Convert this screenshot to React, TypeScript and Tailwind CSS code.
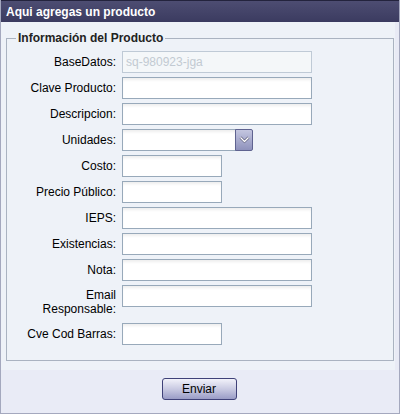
import { useState } from "react"

const font = { fontFamily: '"Liberation Sans", Arial, sans-serif' }

type Row = { label: string; lines?: string[]; width: "wide" | "short"; value?: string; disabled?: boolean }

const rows: Row[] = [
  { label: "BaseDatos:", width: "wide", value: "sq-980923-jga", disabled: true },
  { label: "Clave Producto:", width: "wide" },
  { label: "Descripcion:", width: "wide" },
  { label: "Unidades:", width: "wide" },
  { label: "Costo:", width: "short" },
  { label: "Precio Público:", width: "short" },
  { label: "IEPS:", width: "wide" },
  { label: "Existencias:", width: "wide" },
  { label: "Nota:", width: "wide" },
  { label: "Email Responsable:", lines: ["Email", "Responsable:"], width: "wide" },
  { label: "Cve Cod Barras:", width: "short" },
]

function TextBox({ row }: { row: Row }) {
  const [value, setValue] = useState(row.value ?? "")
  const w = row.width === "wide" ? "w-[190px]" : "w-[100px]"
  if (row.disabled) {
    return (
      <input
        disabled
        value={value}
        onChange={(e) => setValue(e.target.value)}
        className={`${w} h-[22px] px-[3px] text-[12px] border border-[#bfcad6] bg-[#f4f7f9] text-[#c2cad2] outline-none`}
        style={font}
      />
    )
  }
  return (
    <input
      value={value}
      onChange={(e) => setValue(e.target.value)}
      className={`${w} h-[22px] px-[3px] text-[12px] border border-[#98a9ba] bg-white shadow-[inset_0_3px_3px_-1px_rgba(0,0,0,0.07)] text-black outline-none`}
      style={font}
    />
  )
}

function UnitSelect() {
  return (
    <div className="flex h-[22px] w-[131px]">
      <div className="flex-1 border border-[#98a9ba] bg-white shadow-[inset_0_3px_3px_-1px_rgba(0,0,0,0.07)]" />
      <button className="w-[18px] h-[22px] -ml-px flex items-center justify-center rounded-r-[2px] border border-[#5f6390] bg-gradient-to-b from-[#c4c6e0] to-[#8f92bc]">
        <svg width="11" height="8" viewBox="0 0 11 8">
          <path d="M1.5 1.5 L5.5 5.5 L9.5 1.5" fill="none" stroke="#5a5a78" strokeWidth="2.6" />
          <path d="M1.5 1.5 L5.5 5.5 L9.5 1.5" fill="none" stroke="#ffffff" strokeWidth="1.3" />
        </svg>
      </button>
    </div>
  )
}

export default function App() {
  return (
    <div
      className="w-[400px] h-[414px] flex flex-col bg-[#e9ebf6] border-x border-b border-[#a4a8be]"
      style={font}
    >
      <div className="h-[22px] shrink-0 flex items-center px-[5px] border-t border-[#23233d] bg-gradient-to-b from-[#4d4d72] to-[#3b3b60]">
        <span className="text-white font-bold text-[12px] leading-none">Aqui agregas un producto</span>
      </div>

      <div className="flex h-[348px] shrink-0">
        <div className="w-[394px] bg-[#eef2f8] pl-[5px] pt-[7px]">
          <fieldset className="w-[388px] h-[332px] border border-[#aab3c1] pl-0 pt-[4px]">
            <legend className="ml-[9px] px-[2px] text-[12px] font-bold text-[#222]">Información del Producto</legend>
            <div className="flex flex-col gap-[4px]">
              {rows.map((row) =>
                row.lines ? (
                  <div key={row.label} className="flex items-start gap-[6px]">
                    <div className="w-[109px] pt-[3px] pb-[3px] text-right text-[12px] leading-[14px] text-black">
                      {row.lines.map((l) => (
                        <div key={l}>{l}</div>
                      ))}
                    </div>
                    <TextBox row={row} />
                  </div>
                ) : (
                  <div key={row.label} className="flex items-center gap-[6px]">
                    <div className="w-[109px] text-right text-[12px] leading-[14px] text-black">{row.label}</div>
                    {row.label === "Unidades:" ? <UnitSelect /> : <TextBox row={row} />}
                  </div>
                ),
              )}
            </div>
          </fieldset>
        </div>
        <div className="flex-1 bg-[#e8eaf5]" />
      </div>

      <div className="flex-1 flex items-start justify-center pt-[8px]">
        <button className="w-[75px] h-[22px] -ml-[2px] rounded-[3px] border border-[#3f4178] bg-gradient-to-b from-[#f2f2fa] via-[#c9cae2] to-[#9a9cc6] text-[12px] text-black">
          Enviar
        </button>
      </div>
    </div>
  )
}
